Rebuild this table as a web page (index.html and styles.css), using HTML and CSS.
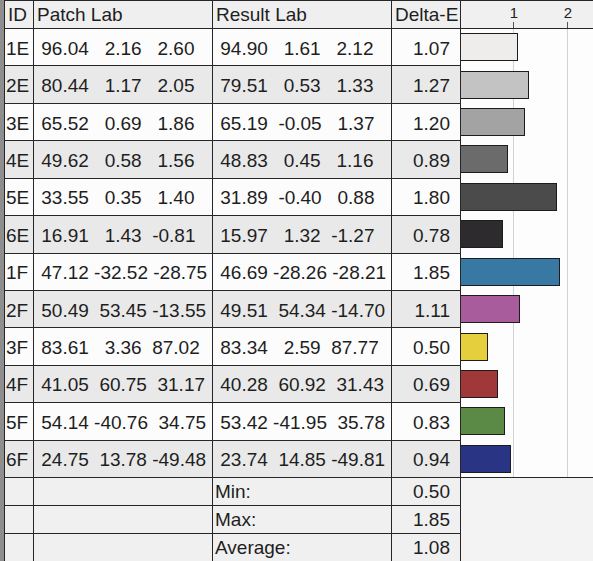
FILE: index.html
```html
<!DOCTYPE html>
<html>
<head>
<meta charset="utf-8">
<link rel="stylesheet" href="styles.css">
</head>
<body>
<div class="sheet">
  <div class="cell head">ID</div>
  <div class="cell head">Patch Lab</div>
  <div class="cell head">Result Lab</div>
  <div class="cell head de-head">Delta-E</div>
  <div class="axis">
    <span class="label l1">1</span><span class="label l2">2</span>
    <span class="tick k1"></span><span class="tick k2"></span>
  </div>

  <div class="chart">
    <span class="gridline g1"></span><span class="gridline g2"></span>
    <div class="bar-row"><div class="bar b1e" style="width:57px"></div></div>
    <div class="bar-row"><div class="bar b2e" style="width:67.7px"></div></div>
    <div class="bar-row"><div class="bar b3e" style="width:64px"></div></div>
    <div class="bar-row"><div class="bar b4e" style="width:47.4px"></div></div>
    <div class="bar-row"><div class="bar b5e" style="width:95.9px"></div></div>
    <div class="bar-row"><div class="bar b6e" style="width:41.6px"></div></div>
    <div class="bar-row"><div class="bar b1f" style="width:98.6px"></div></div>
    <div class="bar-row"><div class="bar b2f" style="width:59.2px"></div></div>
    <div class="bar-row"><div class="bar b3f" style="width:26.7px"></div></div>
    <div class="bar-row"><div class="bar b4f" style="width:36.8px"></div></div>
    <div class="bar-row"><div class="bar b5f" style="width:44.2px"></div></div>
    <div class="bar-row"><div class="bar b6f" style="width:50.1px"></div></div>
  </div>
  <div class="blank"></div>

  <div class="cell light id">1E</div><div class="cell light lab"> 96.04   2.16   2.60</div><div class="cell light lab"> 94.90   1.61   2.12</div><div class="cell light de">1.07</div>
  <div class="cell dark id">2E</div><div class="cell dark lab"> 80.44   1.17   2.05</div><div class="cell dark lab"> 79.51   0.53   1.33</div><div class="cell dark de">1.27</div>
  <div class="cell light id">3E</div><div class="cell light lab"> 65.52   0.69   1.86</div><div class="cell light lab"> 65.19  -0.05   1.37</div><div class="cell light de">1.20</div>
  <div class="cell dark id">4E</div><div class="cell dark lab"> 49.62   0.58   1.56</div><div class="cell dark lab"> 48.83   0.45   1.16</div><div class="cell dark de">0.89</div>
  <div class="cell light id">5E</div><div class="cell light lab"> 33.55   0.35   1.40</div><div class="cell light lab"> 31.89  -0.40   0.88</div><div class="cell light de">1.80</div>
  <div class="cell dark id">6E</div><div class="cell dark lab"> 16.91   1.43  -0.81</div><div class="cell dark lab"> 15.97   1.32  -1.27</div><div class="cell dark de">0.78</div>
  <div class="cell light id">1F</div><div class="cell light lab"> 47.12 -32.52 -28.75</div><div class="cell light lab"> 46.69 -28.26 -28.21</div><div class="cell light de">1.85</div>
  <div class="cell dark id">2F</div><div class="cell dark lab"> 50.49  53.45 -13.55</div><div class="cell dark lab"> 49.51  54.34 -14.70</div><div class="cell dark de">1.11</div>
  <div class="cell light id">3F</div><div class="cell light lab"> 83.61   3.36  87.02</div><div class="cell light lab"> 83.34   2.59  87.77</div><div class="cell light de">0.50</div>
  <div class="cell dark id">4F</div><div class="cell dark lab"> 41.05  60.75  31.17</div><div class="cell dark lab"> 40.28  60.92  31.43</div><div class="cell dark de">0.69</div>
  <div class="cell light id">5F</div><div class="cell light lab"> 54.14 -40.76  34.75</div><div class="cell light lab"> 53.42 -41.95  35.78</div><div class="cell light de">0.83</div>
  <div class="cell dark id">6F</div><div class="cell dark lab"> 24.75  13.78 -49.48</div><div class="cell dark lab"> 23.74  14.85 -49.81</div><div class="cell dark de">0.94</div>

  <div class="cell sum"></div><div class="cell sum"></div><div class="cell sum">Min:</div><div class="cell sum de">0.50</div>
  <div class="cell sum"></div><div class="cell sum"></div><div class="cell sum">Max:</div><div class="cell sum de">1.85</div>
  <div class="cell sum"></div><div class="cell sum"></div><div class="cell sum">Average:</div><div class="cell sum de">1.08</div>
</div>
</body>
</html>
```

FILE: styles.css
```css
html, body {
  margin: 0;
  padding: 0;
  background: #f2f2f2;
  overflow: hidden;
}

.sheet {
  box-sizing: border-box;
  width: 593px;
  height: 561px;
  border-left: 4px solid #8e8e8e;
  padding: 1px 0 0 1px;
  background: #262626;
  display: grid;
  grid-template-columns: 28px 178px 178px 68px 132px;
  grid-template-rows: 27px repeat(12, minmax(0, 1fr)) 27px 27px 27px;
  gap: 1px;
  font-family: "Liberation Sans", Arial, sans-serif;
  font-size: 19px;
  color: #1e1e1e;
}

.cell {
  display: flex;
  align-items: center;
  padding: 2px 0 0 2px;
  white-space: pre;
  overflow: hidden;
  line-height: 21px;
}

.head {
  background: #efefef;
  padding: 0 0 0 3px;
}

.light { background: #fcfcfc; }
.dark { background: #e9e9e9; }
.sum { background: #f0f0f0; padding-top: 0; }

.id { padding-left: 1px; }

.de {
  justify-content: flex-end;
  padding-right: 10px;
}

.axis {
  grid-column: 5;
  grid-row: 1;
  position: relative;
  background: #f0f0f0;
}

.label {
  position: absolute;
  top: 3px;
  font-size: 15px;
  line-height: 17px;
  color: #222;
  transform: translateX(-50%);
}
.l1 { left: 53px; }
.l2 { left: 107px; }

.tick {
  position: absolute;
  bottom: 0;
  width: 1px;
  height: 6px;
  background: #555;
}
.k1 { left: 52px; }
.k2 { left: 106px; }

.chart {
  grid-column: 5;
  grid-row: 2 / span 12;
  position: relative;
  background: #fdfdfd;
  display: grid;
  grid-template-rows: repeat(12, minmax(0, 1fr));
  row-gap: 1px;
}

.gridline {
  position: absolute;
  top: 0;
  bottom: 0;
  width: 1px;
  background: #d2d2d2;
}
.g1 { left: 52px; }
.g2 { left: 106px; }

.bar-row {
  display: flex;
  align-items: center;
}

.bar {
  position: relative;
  z-index: 1;
  box-sizing: border-box;
  height: 28px;
  border: 1px solid #1c1c1c;
  border-left: 0;
}

.b1e { background: #efedeb; }
.b2e { background: #c3c3c3; }
.b3e { background: #a3a3a3; }
.b4e { background: #6b6b6b; }
.b5e { background: #4b4b4b; }
.b6e { background: #2d2b2e; }
.b1f { background: #3779a3; }
.b2f { background: #a85c9c; }
.b3f { background: #e6cf3c; }
.b4f { background: #a0383a; }
.b5f { background: #5b8a46; }
.b6f { background: #2a3484; }

.blank {
  grid-column: 5;
  grid-row: 14 / span 3;
  background: #f3f3f3;
}
```
